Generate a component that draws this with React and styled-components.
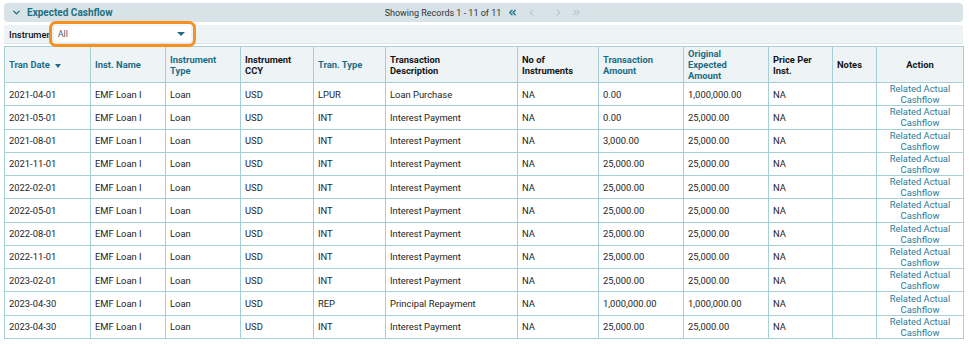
import React from "react";
import styled, { createGlobalStyle } from "styled-components";
import {
  ChevronDown,
  ChevronsLeft,
  ChevronLeft,
  ChevronRight,
  ChevronsRight,
} from "lucide-react";

const Global = createGlobalStyle`
  body {
    margin: 0;
    background: #fff;
    font-family: Roboto, "Liberation Sans", Arial, sans-serif;
    color: #1d1d1d;
  }
`;

const Panel = styled.div`
  padding: 3px 6px 0 4px;
`;

const HeaderBar = styled.div`
  display: grid;
  grid-template-columns: 1fr auto 1fr;
  align-items: center;
  height: 19px;
  background: #d8e3e8;
  border-radius: 4px;
`;

const Title = styled.div`
  display: flex;
  align-items: center;
  gap: 5px;
  padding-left: 7px;
  font-size: 10px;
  font-weight: 700;
  color: #1d6f80;
`;

const Pager = styled.div`
  display: flex;
  align-items: center;
  font-size: 9px;
  color: #333;
`;

const PageBtn = styled.span`
  display: flex;
  margin-left: ${(p) => p.gap}px;
  color: ${(p) => (p.active ? "#1f7b8c" : "#93bac3")};
`;

const FilterBar = styled.div`
  display: flex;
  align-items: center;
  height: 18px;
  margin-top: 3px;
  padding-left: 5px;
  background: #eef3f5;
  border-bottom: 1px solid #dfe6e9;
`;

const Label = styled.span`
  width: 40px;
  overflow: hidden;
  white-space: nowrap;
  font-size: 9.4px;
  font-weight: 500;
  color: #111;
`;

const Select = styled.div`
  position: relative;
  z-index: 1;
  display: flex;
  align-items: center;
  justify-content: space-between;
  width: 137px;
  height: 16px;
  margin-left: 5px;
  padding: 0 6px 0 4px;
  box-sizing: border-box;
  background: #fff;
  border-radius: 2px;
  outline: 3px solid #f7901e;
  outline-offset: 2px;
  font-size: 8.6px;
  color: #555;
`;

const Caret = styled.span`
  width: 0;
  height: 0;
  border-left: 4px solid transparent;
  border-right: 4px solid transparent;
  border-top: 4px solid #1f6f80;
`;

const Table = styled.table`
  width: 959px;
  margin-top: 2px;
  border-collapse: collapse;
  table-layout: fixed;
  font-size: 9.4px;
`;

const Th = styled.th`
  height: 35px;
  padding: 0 4px;
  background: #eef4f6;
  border: 1px solid #a7cfd6;
  text-align: ${(p) => (p.center ? "center" : "left")};
  font-weight: 700;
  line-height: 11px;
  color: ${(p) => (p.sort ? "#1a6d86" : "#141414")};
`;

const SortArrow = styled.span`
  display: inline-block;
  margin-left: 5px;
  vertical-align: middle;
  border-left: 3.5px solid transparent;
  border-right: 3.5px solid transparent;
  border-top: 4px solid #1a6d86;
`;

const Td = styled.td`
  height: 22.27px;
  padding: 0 4px;
  border: 1px solid #a7cfd6;
  line-height: 11px;
  white-space: nowrap;
  overflow: hidden;
`;

const Link = styled(Td)`
  text-align: center;
  white-space: normal;
  color: #2b7a99;
`;

const cols = [86, 75, 75, 73, 72, 132, 81, 85, 85, 64, 44, 87];

const headers = [
  { t: ["Tran Date"], sort: true, arrow: true },
  { t: ["Inst. Name"], sort: true },
  { t: ["Instrument", "Type"], sort: true },
  { t: ["Instrument", "CCY"] },
  { t: ["Tran. Type"], sort: true },
  { t: ["Transaction", "Description"] },
  { t: ["No of", "Instruments"] },
  { t: ["Transaction", "Amount"], sort: true },
  { t: ["Original", "Expected", "Amount"], sort: true },
  { t: ["Price Per", "Inst."] },
  { t: ["Notes"] },
  { t: ["Action"], center: true },
];

const rows = [
  ["2021-04-01", "LPUR", "Loan Purchase", "0.00", "1,000,000.00"],
  ["2021-05-01", "INT", "Interest Payment", "0.00", "25,000.00"],
  ["2021-08-01", "INT", "Interest Payment", "3,000.00", "25,000.00"],
  ["2021-11-01", "INT", "Interest Payment", "25,000.00", "25,000.00"],
  ["2022-02-01", "INT", "Interest Payment", "25,000.00", "25,000.00"],
  ["2022-05-01", "INT", "Interest Payment", "25,000.00", "25,000.00"],
  ["2022-08-01", "INT", "Interest Payment", "25,000.00", "25,000.00"],
  ["2022-11-01", "INT", "Interest Payment", "25,000.00", "25,000.00"],
  ["2023-02-01", "INT", "Interest Payment", "25,000.00", "25,000.00"],
  ["2023-04-30", "REP", "Principal Repayment", "1,000,000.00", "1,000,000.00"],
  ["2023-04-30", "INT", "Interest Payment", "25,000.00", "25,000.00"],
];

export default function App() {
  return (
    <Panel>
      <Global />
      <HeaderBar>
        <Title>
          <ChevronDown size={11} strokeWidth={3} />
          Expected Cashflow
        </Title>
        <Pager>
          Showing Records 1 - 11 of 11
          <PageBtn gap={6} active>
            <ChevronsLeft size={11} strokeWidth={3} />
          </PageBtn>
          <PageBtn gap={8}>
            <ChevronLeft size={11} strokeWidth={2} />
          </PageBtn>
          <PageBtn gap={16}>
            <ChevronRight size={11} strokeWidth={2} />
          </PageBtn>
          <PageBtn gap={7}>
            <ChevronsRight size={11} strokeWidth={2} />
          </PageBtn>
        </Pager>
        <div />
      </HeaderBar>
      <FilterBar>
        <Label>Instrument</Label>
        <Select>
          All
          <Caret />
        </Select>
      </FilterBar>
      <Table>
        <colgroup>
          {cols.map((w, i) => (
            <col key={i} style={{ width: w }} />
          ))}
        </colgroup>
        <thead>
          <tr>
            {headers.map((h) => (
              <Th key={h.t.join(" ")} sort={h.sort} center={h.center}>
                {h.t.map((line, i) => (
                  <React.Fragment key={i}>
                    {i > 0 && <br />}
                    {line}
                  </React.Fragment>
                ))}
                {h.arrow && <SortArrow />}
              </Th>
            ))}
          </tr>
        </thead>
        <tbody>
          {rows.map((r, i) => (
            <tr key={i}>
              <Td>{r[0]}</Td>
              <Td>EMF Loan I</Td>
              <Td>Loan</Td>
              <Td>USD</Td>
              <Td>{r[1]}</Td>
              <Td>{r[2]}</Td>
              <Td>NA</Td>
              <Td>{r[3]}</Td>
              <Td>{r[4]}</Td>
              <Td>NA</Td>
              <Td />
              <Link>
                Related Actual
                <br />
                Cashflow
              </Link>
            </tr>
          ))}
        </tbody>
      </Table>
    </Panel>
  );
}
